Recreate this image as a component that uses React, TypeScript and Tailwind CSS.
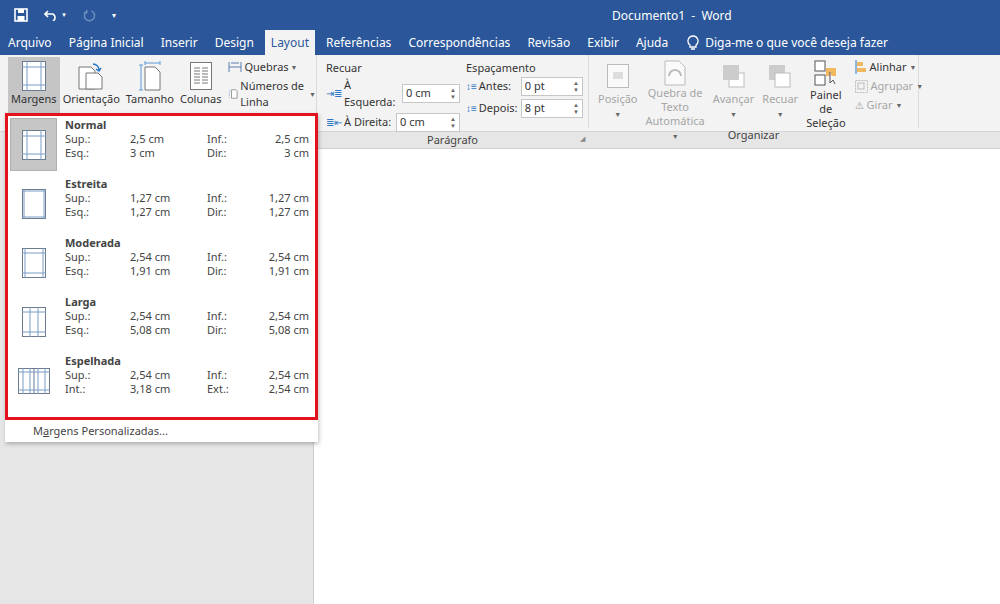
import React from "react";

const F = { fontFamily: '"Noto Sans", "Open Sans", sans-serif' };

function PageIcon({ kind }: { kind: string }) {
  const blue = "#7a9cc6";
  if (kind === "mirror")
    return (
      <svg width="32" height="26" viewBox="0 0 32 26">
        <rect x="0.5" y="0.5" width="31" height="25" fill="#fff" stroke="#6b7b8c" />
        <line x1="16" y1="0" x2="16" y2="26" stroke="#6b7b8c" />
        <line x1="5" y1="0" x2="5" y2="26" stroke={blue} />
        <line x1="12" y1="0" x2="12" y2="26" stroke={blue} />
        <line x1="20" y1="0" x2="20" y2="26" stroke={blue} />
        <line x1="27" y1="0" x2="27" y2="26" stroke={blue} />
        <line x1="0" y1="4" x2="32" y2="4" stroke={blue} />
        <line x1="0" y1="22" x2="32" y2="22" stroke={blue} />
      </svg>
    );
  const m: Record<string, [number, number]> = { normal: [6, 5], narrow: [2, 2], moderate: [5, 3], wide: [5, 8] };
  const [t, l] = m[kind];
  return (
    <svg width="24" height="30" viewBox="0 0 24 30">
      <rect x="0.5" y="0.5" width="23" height="29" fill="#fff" stroke="#6b7b8c" />
      <line x1={l} y1="0" x2={l} y2="30" stroke={blue} />
      <line x1={24 - l} y1="0" x2={24 - l} y2="30" stroke={blue} />
      <line x1="0" y1={t} x2="24" y2={t} stroke={blue} />
      <line x1="0" y1={30 - t} x2="24" y2={30 - t} stroke={blue} />
    </svg>
  );
}

const items = [
  { k: "normal", n: "Normal", v: ["Sup.:", "2,5 cm", "Inf.:", "2,5 cm", "Esq.:", "3 cm", "Dir.:", "3 cm"] },
  { k: "narrow", n: "Estreita", v: ["Sup.:", "1,27 cm", "Inf.:", "1,27 cm", "Esq.:", "1,27 cm", "Dir.:", "1,27 cm"] },
  { k: "moderate", n: "Moderada", v: ["Sup.:", "2,54 cm", "Inf.:", "2,54 cm", "Esq.:", "1,91 cm", "Dir.:", "1,91 cm"] },
  { k: "wide", n: "Larga", v: ["Sup.:", "2,54 cm", "Inf.:", "2,54 cm", "Esq.:", "5,08 cm", "Dir.:", "5,08 cm"] },
  { k: "mirror", n: "Espelhada", v: ["Sup.:", "2,54 cm", "Inf.:", "2,54 cm", "Int.:", "3,18 cm", "Ext.:", "2,54 cm"] },
];

function Caret() {
  return <span className="text-[7px] text-[#666] leading-none">▼</span>;
}

function Big({ label, icon, active, dim }: { label: React.ReactNode; icon: React.ReactNode; active?: boolean; dim?: boolean }) {
  return (
    <div className={`flex flex-col items-center px-[3px] pt-[3px] h-[70px] ${active ? "bg-[#c5c5c5]" : ""} ${dim ? "text-[#a6a6a6]" : "text-[#333]"}`}>
      <div className="h-[32px] flex items-center">{icon}</div>
      <div className="text-[11px] leading-[14px] text-center">{label}</div>
    </div>
  );
}

function Spin({ v, w }: { v: string; w: number }) {
  return (
    <div className="flex items-center justify-between bg-white border border-[#c6c6c6] h-[19px] px-[3px] text-[11px]" style={{ width: w }}>
      <span>{v}</span>
      <span className="flex flex-col text-[6px] leading-[7px] text-[#666]"><span>▲</span><span>▼</span></span>
    </div>
  );
}

export default function App() {
  const tabs = ["Arquivo", "Página Inicial", "Inserir", "Design", "Layout", "Referências", "Correspondências", "Revisão", "Exibir", "Ajuda"];
  return (
    <div className="w-[1000px] h-[604px] overflow-hidden relative bg-[#e6e6e6] text-[#333]" style={F}>
      <div className="bg-[#2b579a] text-white">
        <div className="h-[30px] flex items-center px-[14px] gap-[16px] text-[12px] relative">
          <svg width="14" height="14" viewBox="0 0 14 14"><rect x="1" y="1" width="12" height="12" fill="none" stroke="#fff" strokeWidth="1.6" /><rect x="4" y="1" width="6" height="4" fill="#fff" /><rect x="3.5" y="8" width="7" height="5" fill="#fff" /></svg>
          <span className="flex items-center gap-[3px]"><svg width="14" height="12" viewBox="0 0 14 12"><path d="M4 2 L1 5 L4 8 M1 5 H9 a4 4 0 0 1 0 7" fill="none" stroke="#fff" strokeWidth="1.6" /></svg><span className="text-[6px]">▼</span></span>
          <svg width="13" height="13" viewBox="0 0 14 14"><path d="M9 2 A5.5 5.5 0 1 1 4 2.5 M4 1 V4 H1" fill="none" stroke="#6f8fc2" strokeWidth="1.6" /></svg>
          <span className="text-[8px]">▾</span>
          <span className="absolute left-[612px] top-[7px]">Documento1&nbsp; -&nbsp; Word</span>
        </div>
        <div className="h-[25px] flex items-end pl-[2px] text-[12px]">
          {tabs.map((t) => (
            <div key={t} className={`h-[25px] px-[6px] mr-[5px] flex items-center ${t === "Layout" ? "bg-[#f3f3f3] text-[#2b579a]" : ""}`}>{t}</div>
          ))}
          <div className="h-[25px] flex items-center gap-[6px] ml-[8px]">
            <svg width="12" height="16" viewBox="0 0 12 16"><path d="M6 1 a5 5 0 0 0 -3 9 v2 h6 v-2 a5 5 0 0 0 -3 -9z M4 14 h4" fill="none" stroke="#fff" strokeWidth="1.3" /></svg>
            Diga-me o que você deseja fazer
          </div>
        </div>
      </div>

      <div className="h-[77px] bg-[#f3f3f3] border-b border-[#d5d5d5] flex">
        <div className="w-[317px] flex pl-[8px] pt-[2px] border-r border-[#dadada] my-[3px] mt-0">
          <Big active label={<>Margens<br /><Caret /></>} icon={<PageIcon kind="normal" />} />
          <Big label={<>Orientação<br /><Caret /></>} icon={<svg width="28" height="30" viewBox="0 0 28 30"><path d="M2 6h12l4 4v18H2z" fill="#fff" stroke="#777" /><path d="M9 12h12l4 4v12H9z" fill="#fff" stroke="#777" /><path d="M16 3 a6 6 0 0 1 6 6 m-3 -1 l3 2 l2 -3" fill="none" stroke="#2b78c4" strokeWidth="1.5" /></svg>} />
          <Big label={<>Tamanho<br /><Caret /></>} icon={<svg width="26" height="30" viewBox="0 0 26 30"><path d="M8 6h10l5 5v18H8z" fill="#fff" stroke="#777" /><path d="M4 4v25M2 4h4M2 29h4M8 2h15M8 0v4M23 0v4" stroke="#5a9ad6" /></svg>} />
          <Big label={<>Colunas<br /><Caret /></>} icon={<svg width="22" height="28" viewBox="0 0 22 28"><rect x="0.5" y="0.5" width="21" height="27" fill="#fff" stroke="#777" />{[6, 9, 12, 15, 18, 21].map((y) => <g key={y}><line x1="4" y1={y} x2="10" y2={y} stroke="#777" /><line x1="12" y1={y} x2="18" y2={y} stroke="#777" /></g>)}</svg>} />
          <div className="flex flex-col text-[11px] pl-[4px] pt-[2px] gap-[3px] leading-[16px]">
            <span className="flex items-center gap-[2px]"><svg width="14" height="12" viewBox="0 0 14 12"><path d="M1 1v10M13 1v10M1 6h12M3 2h8" stroke="#5a7fb0" fill="none" /></svg>Quebras <Caret /></span>
            <span className="flex items-center gap-[2px]"><svg width="14" height="14" viewBox="0 0 14 14"><path d="M5 1h6l2 2v10H5z" fill="#fff" stroke="#777" /><path d="M2 2v10" stroke="#5a9ad6" strokeDasharray="1.5 1.5" /></svg>Números de Linha <Caret /></span>
            <span className="flex items-center gap-[2px]"><span className="text-[9px] leading-none">b<sup>a</sup>c</span>Hifenização <Caret /></span>
          </div>
        </div>

        <div className="w-[272px] flex flex-col border-r border-[#dadada] my-[3px] mt-0 text-[11px]">
          <div className="flex pl-[9px] pt-[5px] gap-[6px]">
            <div className="flex flex-col gap-[1px]">
              <span className="leading-[16px]">Recuar</span>
              <div className="flex items-center gap-[2px]"><span className="text-[#2b78c4] text-[10px]">⇥≣</span><span className="w-[56px]">À Esquerda:</span><Spin v="0 cm" w={58} /></div>
              <div className="flex items-center gap-[2px] mt-[2px]"><span className="text-[#2b78c4] text-[10px]">≣⇤</span><span className="w-[50px]">À Direita:</span><Spin v="0 cm" w={64} /></div>
            </div>
            <div className="flex flex-col gap-[1px]">
              <span className="leading-[16px]">Espaçamento</span>
              <div className="flex items-center gap-[2px]"><span className="text-[#2b78c4] text-[10px]">↕≡</span><span className="w-[40px]">Antes:</span><Spin v="0 pt" w={62} /></div>
              <div className="flex items-center gap-[2px] mt-[2px]"><span className="text-[#2b78c4] text-[10px]">↕≡</span><span className="w-[40px]">Depois:</span><Spin v="8 pt" w={62} /></div>
            </div>
          </div>
          <div className="mt-auto mb-[2px] text-center text-[11px] text-[#444] relative">Parágrafo<span className="absolute right-[3px] top-[2px] text-[7px] text-[#888]">◢</span></div>
        </div>

        <div className="w-[330px] flex flex-col border-r border-[#dadada] my-[3px] mt-0">
          <div className="flex pl-[6px] pt-[2px] gap-[2px]">
            <Big dim label={<>Posição<br /><Caret /></>} icon={<svg width="22" height="24" viewBox="0 0 22 24"><rect x="0.5" y="0.5" width="21" height="23" fill="#fafafa" stroke="#bbb" /><rect x="6" y="8" width="10" height="7" fill="#ddd" /></svg>} />
            <Big dim label={<>Quebra de Texto<br />Automática <Caret /></>} icon={<svg width="22" height="26" viewBox="0 0 22 26"><path d="M1 1h14l6 6v18H1z" fill="#fafafa" stroke="#bbb" /><path d="M5 16 a6 6 0 0 1 12 0" fill="none" stroke="#bbb" strokeWidth="2" /></svg>} />
            <Big dim label={<>Avançar<br /><Caret /></>} icon={<svg width="24" height="24" viewBox="0 0 24 24"><rect x="7" y="9" width="15" height="14" fill="#fff" stroke="#bbb" /><rect x="1" y="1" width="16" height="15" fill="#ccc" /></svg>} />
            <Big dim label={<>Recuar<br /><Caret /></>} icon={<svg width="24" height="24" viewBox="0 0 24 24"><rect x="1" y="1" width="16" height="15" fill="#ccc" /><rect x="7" y="9" width="15" height="14" fill="#fff" stroke="#bbb" /></svg>} />
            <Big label={<>Painel de<br />Seleção</>} icon={<svg width="24" height="28" viewBox="0 0 24 28"><rect x="1" y="1" width="10" height="10" fill="#fff" stroke="#555" /><rect x="1" y="15" width="10" height="10" fill="#fff" stroke="#555" /><rect x="12" y="8" width="10" height="8" fill="#f0b860" /><path d="M16 12v11l3-3 2 4" fill="#fff" stroke="#555" /></svg>} />
            <div className="flex flex-col text-[11px] pl-[4px] pt-[2px] gap-[3px] leading-[16px]">
              <span className="flex items-center gap-[3px]"><svg width="12" height="14" viewBox="0 0 12 14"><path d="M1 0v14" stroke="#2b78c4" /><rect x="2" y="2" width="6" height="4" fill="#f0b860" /><rect x="2" y="8" width="9" height="4" fill="#f0b860" /></svg>Alinhar <Caret /></span>
              <span className="flex items-center gap-[3px] text-[#a6a6a6]"><svg width="13" height="13" viewBox="0 0 13 13"><rect x="0.5" y="0.5" width="12" height="12" fill="none" stroke="#bbb" strokeDasharray="2 1" /><rect x="3" y="3" width="6" height="6" fill="none" stroke="#bbb" /></svg>Agrupar <Caret /></span>
              <span className="flex items-center gap-[3px] text-[#a6a6a6]"><span className="text-[10px]">⚠</span>Girar <Caret /></span>
            </div>
          </div>
          <div className="mt-auto mb-[2px] text-center text-[11px] text-[#444]">Organizar</div>
        </div>
      </div>

      <div className="absolute left-[313px] top-[148px] w-[700px] h-[460px] bg-white border-l border-t border-[#d0d0d0]" />

      <div className="absolute left-[5px] top-[113px] w-[313px] bg-white shadow-[1px_2px_4px_rgba(0,0,0,0.25)] text-[11px]">
        <div className="border-[3px] border-[#e0131e] pt-[2px] pb-[4px] pl-[2px] pr-[6px]">
          {items.map((it, i) => (
            <div key={it.k} className="flex h-[59px]">
              <div className={`w-[47px] h-[53px] flex items-center justify-center ${i === 0 ? "bg-[#c6c6c6] border border-[#b0b0b0]" : ""}`}>
                <PageIcon kind={it.k} />
              </div>
              <div className="flex-1 pl-[8px] leading-[14px] text-[#444]">
                <div className="font-bold text-[#444]">{it.n}</div>
                <div className="grid grid-cols-[65px_77px_1fr_auto]">
                  {it.v.map((s, j) => <span key={j} className={j % 4 === 3 ? "text-right" : ""}>{s}</span>)}
                </div>
              </div>
            </div>
          ))}
        </div>
        <div className="h-[22px] pl-[28px] flex items-center text-[#444]"><span>M<u>a</u>rgens Personalizadas...</span></div>
      </div>
    </div>
  );
}
